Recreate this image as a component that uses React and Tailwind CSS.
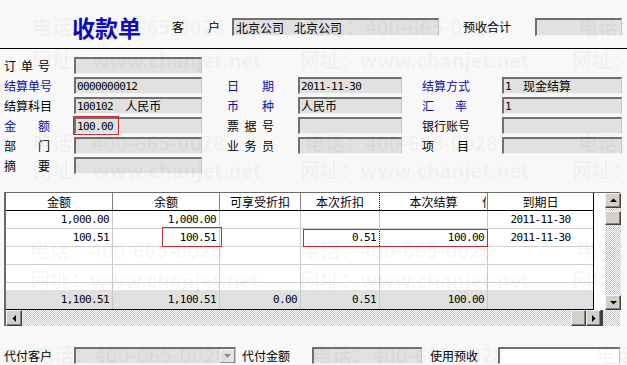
import React from 'react';

const cjk = "font-['Noto_Sans_CJK_SC',sans-serif]";
const mono = "font-['DejaVu_Sans_Mono','Noto_Sans_CJK_SC',monospace] text-[11px] tracking-[-0.6px]";
const hatch = 'bg-[image:repeating-conic-gradient(#c4c4c4_0%_25%,#ffffff_0%_50%)] bg-[length:2px_2px]';

const heads = ['金额', '余额', '可享受折扣', '本次折扣', '本次结算', '到期日'];
const rows = [
  ['1,000.00', '1,000.00', '', '', '', '2011-11-30'],
  ['100.51', '100.51', '', '0.51', '100.00', '2011-11-30'],
  ['', '', '', '', '', ''],
  ['', '', '', '', '', ''],
];
const total = ['1,100.51', '1,100.51', '0.00', '0.51', '100.00', ''];
const cols = 'grid grid-cols-[107px_107px_81px_79px_108px_105px]';

function Lbl({ t, className = '' }) {
  return (
    <div className={`flex justify-between shrink-0 leading-none ${className}`}>
      {t.split('').map((c, i) => <span key={i}>{c}</span>)}
    </div>
  );
}

function Box({ className = '', white, children }) {
  return (
    <div className={`relative h-full shrink-0 flex items-center pl-px leading-none border-t-2 border-l-2 border-r border-b border-t-[#707070] border-l-[#707070] border-r-[#c4c4c4] border-b-[#f4f4f4] ${white ? 'bg-white' : 'bg-[#e1e1e1]'} ${className}`}>
      {children}
    </div>
  );
}

function Arrow({ dir }) {
  const d = { up: 'M0 5h7L3.5 1.5z', down: 'M0 2h7L3.5 5.5z', left: 'M5 0v7L1.5 3.5z', right: 'M2 0v7L5.5 3.5z' }[dir];
  return (
    <svg width="7" height="7" viewBox="0 0 7 7">
      <path d={d} fill="#000" />
    </svg>
  );
}

function SBtn({ dir, className = '' }) {
  return (
    <div className={`flex items-center justify-center shrink-0 bg-[#d4d0c8] border border-t-[#f4f4f4] border-l-[#f4f4f4] border-r-[#404040] border-b-[#404040] shadow-[inset_-1px_-1px_0_#808080] ${className}`}>
      {dir && <Arrow dir={dir} />}
    </div>
  );
}

function Watermark() {
  const a = '电话：400-665-0028';
  const b = '网址：www.chanjet.net';
  const marks = [
    [a, 32, 15], [a, 305, 15], [a, 578, 15],
    [b, 32, 48], [b, 300, 48], [b, 572, 48],
    [a, 32, 131], [a, 305, 131], [a, 578, 131],
    [b, 32, 158], [b, 300, 158], [b, 572, 158],
    [a, 30, 238], [a, 300, 238], [a, 577, 238],
    [b, 30, 268], [b, 300, 268], [b, 572, 268],
    [a, 34, 343], [a, 312, 343], [a, 596, 343],
  ];
  return (
    <div className="absolute inset-0 pointer-events-none">
      {marks.map(([t, x, y], i) => (
        <div
          key={i}
          className={`absolute whitespace-nowrap text-[20px] font-bold leading-[24px] text-black/[0.04] ${cjk}`}
          style={{ left: x, top: y }}
        >
          {t}
        </div>
      ))}
    </div>
  );
}

export default function App() {
  return (
    <div className={`relative w-[627px] h-[365px] overflow-hidden bg-[#f8f8f8] text-[12px] text-black ${cjk}`}>
      {/* header */}
      <div className="flex items-center h-[48px] pt-[6px]">
        <div className="ml-[72px] w-[70px] shrink-0 text-[23px] font-bold leading-none text-[#0c0cc0]">收款单</div>
        <Lbl t="客户" className="ml-[30px] w-[48px]" />
        <Box className="ml-[12px] w-[207px] h-[18px]!">
          <span className="ml-px">北京公司</span>
          <span className="ml-[10px]">北京公司</span>
        </Box>
        <Lbl t="预收合计" className="ml-[24px] w-[48px]" />
        <Box className="ml-[24px] w-[87px] h-[18px]!" />
      </div>
      <div className="h-px bg-black" />

      {/* form */}
      <div className="mt-[8px] flex flex-col gap-[3px]">
        <div className="flex items-center h-[17px]">
          <Lbl t="订单号" className="ml-[4px] w-[46px]" />
          <Box className="ml-[24px] w-[128px]" />
        </div>
        <div className="flex items-center h-[17px]">
          <Lbl t="结算单号" className="ml-[4px] w-[46px] text-[#0a0ab4]" />
          <Box className="ml-[24px] w-[128px]"><span className={mono}>0000000012</span></Box>
          <Lbl t="日期" className="ml-[25px] w-[47px] text-[#0a0ab4]" />
          <Box className="ml-[24px] w-[104px]"><span className={mono}>2011-11-30</span></Box>
          <Lbl t="结算方式" className="ml-[20px] w-[47px] text-[#0a0ab4]" />
          <Box className="ml-[33px] w-[120px]">
            <span className={mono}>1</span>
            <span className="ml-[12px]">现金结算</span>
          </Box>
        </div>
        <div className="flex items-center h-[17px]">
          <Lbl t="结算科目" className="ml-[4px] w-[46px]" />
          <Box className="ml-[24px] w-[128px]">
            <span className={mono}>100102</span>
            <span className="ml-[12px]">人民币</span>
          </Box>
          <Lbl t="币种" className="ml-[25px] w-[47px] text-[#0a0ab4]" />
          <Box className="ml-[24px] w-[104px]"><span>人民币</span></Box>
          <Lbl t="汇率" className="ml-[20px] w-[45px] text-[#0a0ab4]" />
          <Box className="ml-[35px] w-[120px]"><span className={mono}>1</span></Box>
        </div>
        <div className="flex items-center h-[17px]">
          <Lbl t="金额" className="ml-[4px] w-[46px] text-[#0a0ab4]" />
          <Box className="ml-[24px] w-[128px]">
            <span className={mono}>100.00</span>
            <div className="absolute -left-[3px] -top-[3px] w-[46px] h-[19px] border border-[#d02828]" />
          </Box>
          <Lbl t="票据号" className="ml-[25px] w-[47px]" />
          <Box className="ml-[24px] w-[104px]" />
          <Lbl t="银行账号" className="ml-[20px] w-[47px]" />
          <Box className="ml-[33px] w-[120px]" />
        </div>
        <div className="flex items-center h-[17px]">
          <Lbl t="部门" className="ml-[4px] w-[46px]" />
          <Box className="ml-[24px] w-[128px]" />
          <Lbl t="业务员" className="ml-[25px] w-[47px]" />
          <Box className="ml-[24px] w-[104px]" />
          <Lbl t="项目" className="ml-[20px] w-[47px]" />
          <Box className="ml-[33px] w-[120px]" />
        </div>
        <div className="flex items-center h-[17px]">
          <Lbl t="摘要" className="ml-[4px] w-[46px]" />
          <Box className="ml-[24px] w-[128px]" />
        </div>
      </div>

      {/* grid */}
      <div className="mt-[18px] ml-[4px] w-[616px] h-[134px] flex flex-col border-l-2 border-t border-l-[#6a6a6a] border-t-[#6a6a6a]">
        <div className="flex h-[117px]">
          <div className="w-[588px] shrink-0 flex flex-col bg-white border-r border-b border-black">
            <div className={`${cols} h-[18px] border-b border-black`}>
              {heads.map((h, i) => (
                <div
                  key={h}
                  className={`relative flex items-center justify-center leading-none border-r ${i === 3 ? 'border-dotted border-black' : 'border-[#808080]'} ${i === 5 ? 'border-r-0' : ''}`}
                >
                  {h}
                  {i === 4 && (
                    <span className="absolute right-[1px] top-[3px] w-[4px] overflow-hidden leading-none">付</span>
                  )}
                </div>
              ))}
            </div>
            {rows.map((r, ri) => (
              <div key={ri} className={`relative ${cols} h-[18px] border-b border-[#d0d0d0]`}>
                {r.map((v, i) => (
                  <div
                    key={i}
                    className={`flex items-center leading-none border-r ${i === 5 ? 'justify-center border-r-0' : 'justify-end pr-[3px]'} ${ri === 1 && i === 3 ? 'border-dotted border-black' : 'border-[#c8c8c8]'}`}
                  >
                    <span className={mono}>{v}</span>
                  </div>
                ))}
                {ri === 1 && (
                  <>
                    <div className="absolute left-[156px] -top-[2px] w-[60px] h-[20px] border border-[#d02828]" />
                    <div className="absolute left-[297px] top-0 w-[185px] h-[18px] border border-[#d02828]" />
                  </>
                )}
              </div>
            ))}
            <div className={`${cols} h-[7px]`}>
              {heads.map((h, i) => (
                <div key={h} className={`border-r border-[#c8c8c8] ${i === 5 ? 'border-r-0' : ''}`} />
              ))}
            </div>
            <div className={`${cols} flex-1 bg-[#e0e0e0]`}>
              {total.map((v, i) => (
                <div key={i} className={`flex items-center justify-end pr-[3px] leading-none border-r border-[#c8c8c8] ${i === 5 ? 'border-r-0' : ''}`}>
                  <span className={mono}>{v}</span>
                </div>
              ))}
            </div>
          </div>
          <div className="w-[11px] shrink-0 bg-white" />
          <div className="w-[16px] shrink-0 flex flex-col">
            <SBtn dir="up" className="h-[15px]" />
            <div className={`h-[3px] ${hatch}`} />
            <SBtn className="h-[14px]" />
            <div className={`flex-1 ${hatch}`} />
            <SBtn dir="down" className="h-[15px]" />
          </div>
        </div>
        <div className="flex h-[16px]">
          <SBtn dir="left" className="w-[16px]" />
          <div className={`flex-1 ${hatch}`} />
          <SBtn className="w-[15px]" />
          <SBtn dir="right" className="w-[15px]" />
          <div className="w-[2px] bg-[#404040]" />
          <div className={`w-[17px] ${hatch}`} />
        </div>
      </div>

      {/* bottom */}
      <div className="mt-[21px] flex items-center h-[17px]">
        <Lbl t="代付客户" className="ml-[4px] w-[48px]" />
        <Box className="ml-[22px] w-[162px] justify-end">
          <div className="w-[15px] h-full flex items-center justify-center bg-[#e4e2dc] border border-t-[#f4f4f4] border-l-[#f4f4f4] border-r-[#909090] border-b-[#909090]">
            <svg width="7" height="4" viewBox="0 0 7 4">
              <path d="M0 0h7L3.5 4z" fill="#8a8a8a" />
            </svg>
          </div>
        </Box>
        <Lbl t="代付金额" className="ml-[6px] w-[48px]" />
        <Box className="ml-[22px] w-[110px]" />
        <Lbl t="使用预收" className="ml-[8px] w-[48px]" />
        <Box white className="ml-[20px] w-[122px]" />
      </div>

      <Watermark />
    </div>
  );
}
